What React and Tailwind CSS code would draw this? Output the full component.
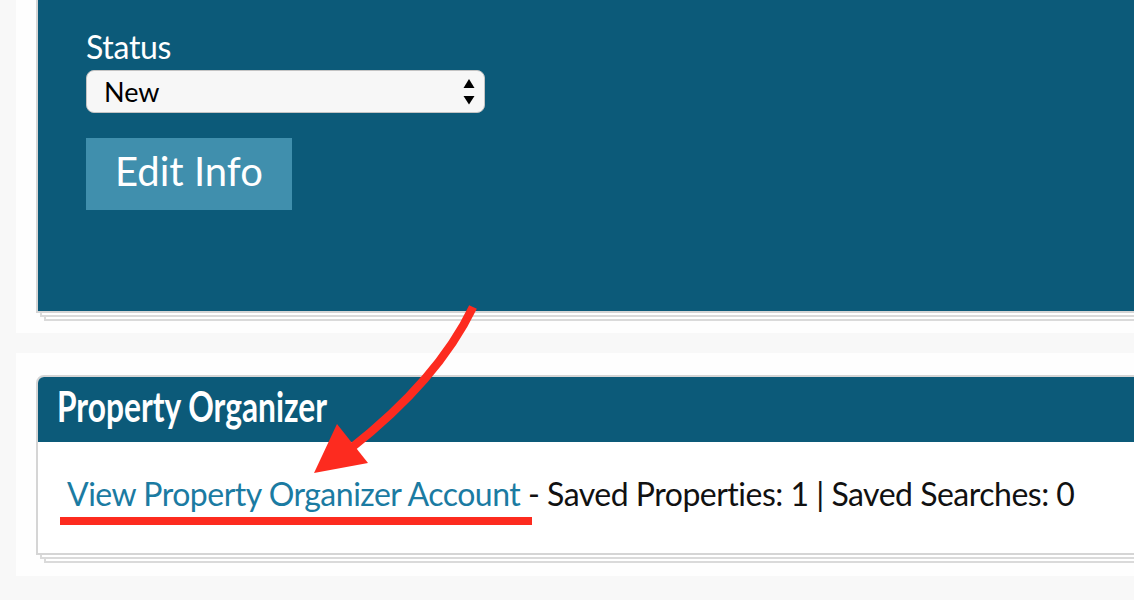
export default function App() {
  const stack =
    "shadow-[4px_4px_0_-2px_#ffffff,4px_4px_0_0_#dadada,8px_8px_0_-2px_#ffffff,8px_8px_0_0_#dadada]";
  return (
    <div className="relative h-[600px] w-[1134px] overflow-hidden bg-[#f8f8f8] font-['Lato',sans-serif]">
      {/* Lead details card */}
      <div className="ml-4 bg-[#fefefe] pb-5 pl-5">
        <div
          className={`h-[313px] w-[1200px] border-2 border-t-0 border-[#d5d5d5] bg-[#0c5a79] pl-[48px] pt-[28px] ${stack}`}
        >
          <label className="block text-[32px] leading-[38px] tracking-[-0.3px] text-white">Status</label>
          <div className="mt-[4px] flex h-[43px] w-[399px] items-center justify-between rounded-[8px] border border-[#c4c4c4] bg-[#f7f7f7] pl-[17px] pr-[9px]">
            <span className="text-[27px] leading-[32px] text-black">New</span>
            <svg width="12" height="26" viewBox="0 0 12 26" className="block">
              <polygon points="6,0 11.5,9 0.5,9" fill="#000" />
              <polygon points="0.5,17 11.5,17 6,25.5" fill="#000" />
            </svg>
          </div>
          <button className="mt-[25px] flex h-[72px] w-[206px] items-center justify-center bg-[#408fad] pb-[6px] text-[40px] leading-[48px] text-white">
            Edit Info
          </button>
        </div>
      </div>

      {/* Property organizer card */}
      <div className="ml-4 mt-5 bg-[#fefefe] pb-[21px] pl-5 pt-[22px]">
        <div
          className={`w-[1200px] overflow-hidden rounded-tl-[8px] border-2 border-[#d5d5d5] bg-white ${stack}`}
        >
          <div className="h-[65px] bg-[#0c5a79] pl-[19px] pt-[4px]">
            <h2 className="inline-block origin-left scale-x-[0.755] text-[42px] font-bold leading-[50px] text-white">
              Property Organizer
            </h2>
          </div>
          <div className="h-[111px] pl-[29px] pt-[33px] text-[32px] leading-[38px] tracking-[-0.5px] text-[#111]">
            <a href="#" className="text-[#1b7ba2]">
              View Property Organizer Account
            </a>
            <span> - Saved Properties: 1 | Saved Searches: 0</span>
          </div>
        </div>
      </div>

      {/* Red callout arrow and underline */}
      <svg
        className="pointer-events-none absolute left-0 top-0"
        width="1134"
        height="600"
        viewBox="0 0 1134 600"
      >
        <path
          d="M473 307 Q438 380 350 449"
          fill="none"
          stroke="#fd2b1f"
          strokeWidth="8.5"
          strokeLinecap="butt"
        />
        <polygon points="314,473 337,424 368,463" fill="#fd2b1f" />
        <rect x="60" y="517" width="472" height="8" fill="#fd2b1f" />
      </svg>
    </div>
  );
}
